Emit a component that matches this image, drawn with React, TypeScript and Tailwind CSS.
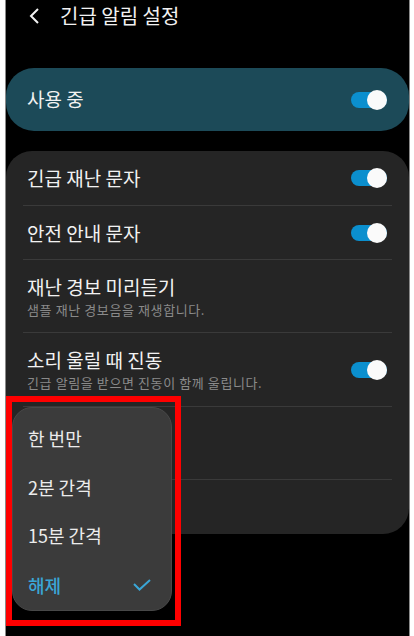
import React from 'react';

const font = { fontFamily: '"Noto Sans CJK KR", "Noto Sans", sans-serif' };

const Toggle: React.FC = () => (
    <div className="relative w-[36px] h-[20px] flex items-center flex-shrink-0">
        <div className="w-[36px] h-[16px] rounded-full bg-[#0b8fce]" />
        <div className="absolute right-0 top-0 w-[20px] h-[20px] rounded-full bg-[#fafafa]" />
    </div>
);

interface RowProps {
    title?: string;
    sub?: string;
    toggle?: boolean;
    h: string;
    divider?: boolean;
}

const Row: React.FC<RowProps> = ({ title, sub, toggle, h, divider }) => (
    <div className={`${h} mx-[17px] flex items-center justify-between ${divider ? 'border-b border-[#3a3a3a]' : ''}`}>
        <div className="pl-[4px] min-w-0">
            {title && <p className="text-[19px] leading-[24px] text-[#f2f2f2]">{title}</p>}
            {sub && <p className="text-[13px] leading-[16px] mt-[3px] tracking-[0.6px] text-[#8a8a8a]">{sub}</p>}
        </div>
        {toggle && <div className="mr-[5px]"><Toggle /></div>}
    </div>
);

const App: React.FC = () => {
    const options = ['한 번만', '2분 간격', '15분 간격'];

    return (
        <div className="w-[414px] h-[636px] bg-white pl-[5px] pr-[4px]" style={font}>
            <div className="relative h-full bg-black border-x border-[#8a8a8a] overflow-hidden">
                {/* header */}
                <div className="h-[32px] flex items-center pl-[22px]">
                    <svg width="12" height="18" viewBox="0 0 12 18" fill="none" stroke="#f2f2f2" strokeWidth="2">
                        <path d="M10 2 L3 9 L10 16" />
                    </svg>
                    <span className="ml-[20px] text-[20px] text-[#f2f2f2]">긴급 알림 설정</span>
                </div>

                {/* master switch */}
                <div className="mt-[36px] h-[63px] rounded-[28px] bg-[#1c4a58] flex items-center justify-between pl-[21px] pr-[22px]">
                    <span className="text-[19px] text-[#f2f2f2]">사용 중</span>
                    <Toggle />
                </div>

                {/* settings card */}
                <div className="mt-[20px] h-[383px] rounded-[26px] bg-[#252525]">
                    <Row title="긴급 재난 문자" toggle h="h-[55px]" divider />
                    <Row title="안전 안내 문자" toggle h="h-[54px]" divider />
                    <Row title="재난 경보 미리듣기" sub="샘플 재난 경보음을 재생합니다." h="h-[73px]" divider />
                    <Row title="소리 울릴 때 진동" sub="긴급 알림을 받으면 진동이 함께 울립니다." toggle h="h-[74px]" divider />
                    <Row h="h-[73px]" divider />
                    <Row h="h-[53px]" />
                </div>

                {/* popup menu */}
                <div className="absolute left-[6px] top-[407px] w-[160px] h-[204px] rounded-[20px] bg-[#3b3b3b] border border-[#484848] flex flex-col pl-[15px] pr-[20px] pt-[6px]">
                    {options.map((o) => (
                        <div key={o} className="h-[51px] flex items-center text-[18px] text-[#ececec]">{o}</div>
                    ))}
                    <div className="h-[52px] flex items-center justify-between text-[18px] text-[#3aa6d6] font-medium">
                        <span>해제</span>
                        <svg width="18" height="12" viewBox="0 0 18 12" fill="none" stroke="#3aa6d6" strokeWidth="2">
                            <path d="M1 5 L6.5 10.5 L17 1" />
                        </svg>
                    </div>
                </div>

                {/* highlight box */}
                <div className="absolute left-0 top-[396px] w-[175px] h-[230px] border-[6px] border-[#ff0000]" />
            </div>
        </div>
    );
};

export default App;
